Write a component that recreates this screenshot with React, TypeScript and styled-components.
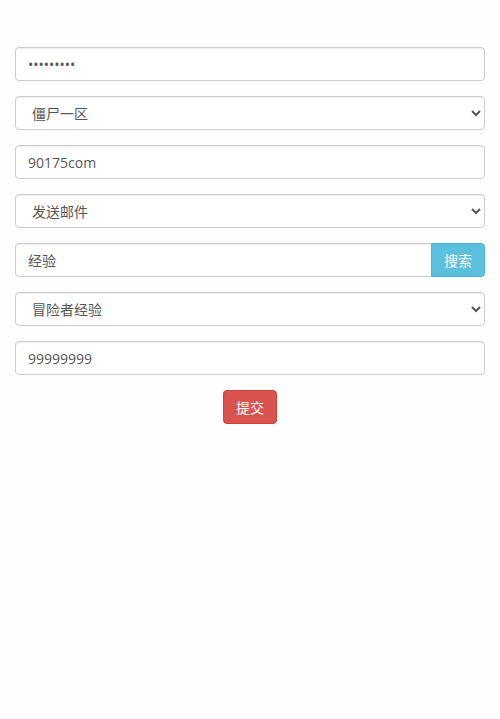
import styled, { createGlobalStyle } from "styled-components";

const GlobalStyle = createGlobalStyle`
  html, body {
    margin: 0;
    padding: 0;
    background: #fefefe;
  }
  body {
    font-family: "Open Sans", "Noto Sans CJK SC", sans-serif;
    font-size: 14px;
    color: #555;
  }
`;

const Form = styled.form`
  padding: 47px 15px 0;
  display: flex;
  flex-direction: column;
  gap: 15px;
`;

const Field = styled.input`
  box-sizing: border-box;
  display: block;
  width: 100%;
  height: 34px;
  padding: 6px 12px;
  font: inherit;
  font-size: 14px;
  color: #555;
  background: #fff;
  border: 1px solid #ccc;
  border-radius: 4px;
  box-shadow: inset 0 1px 1px rgba(0, 0, 0, 0.075);
  outline: none;
`;

const Select = styled.select`
  box-sizing: border-box;
  display: block;
  width: 100%;
  height: 34px;
  padding: 6px 6px 6px 12px;
  font: inherit;
  font-size: 14px;
  color: #555;
  background: #fff;
  border: 1px solid #ccc;
  border-radius: 4px;
  box-shadow: inset 0 1px 1px rgba(0, 0, 0, 0.075);
  outline: none;
`;

const InputGroup = styled.div`
  display: flex;
`;

const GroupField = styled(Field)`
  flex: 1;
  border-radius: 4px 0 0 4px;
`;

const Button = styled.button<{ $tone: "info" | "danger" }>`
  box-sizing: border-box;
  height: 34px;
  padding: 6px 12px;
  font: inherit;
  font-size: 14px;
  color: #fff;
  cursor: pointer;
  background: ${(p) => (p.$tone === "info" ? "#5bc0de" : "#d9534f")};
  border: 1px solid ${(p) => (p.$tone === "info" ? "#46b8da" : "#d43f3a")};
  border-radius: 4px;
  white-space: nowrap;
`;

const GroupButton = styled(Button)`
  border-radius: 0 4px 4px 0;
  margin-left: -1px;
`;

const Actions = styled.div`
  display: flex;
  justify-content: center;
`;

export default function App() {
  return (
    <>
      <GlobalStyle />
      <Form onSubmit={(e) => e.preventDefault()}>
        <Field type="password" defaultValue="123456789" />
        <Select defaultValue="1">
          <option value="1">僵尸一区</option>
        </Select>
        <Field type="text" defaultValue="90175com" />
        <Select defaultValue="mail">
          <option value="mail">发送邮件</option>
        </Select>
        <InputGroup>
          <GroupField type="text" defaultValue="经验" />
          <GroupButton type="button" $tone="info">
            搜索
          </GroupButton>
        </InputGroup>
        <Select defaultValue="exp">
          <option value="exp">冒险者经验</option>
        </Select>
        <Field type="text" defaultValue="99999999" />
        <Actions>
          <Button type="submit" $tone="danger">
            提交
          </Button>
        </Actions>
      </Form>
    </>
  );
}
